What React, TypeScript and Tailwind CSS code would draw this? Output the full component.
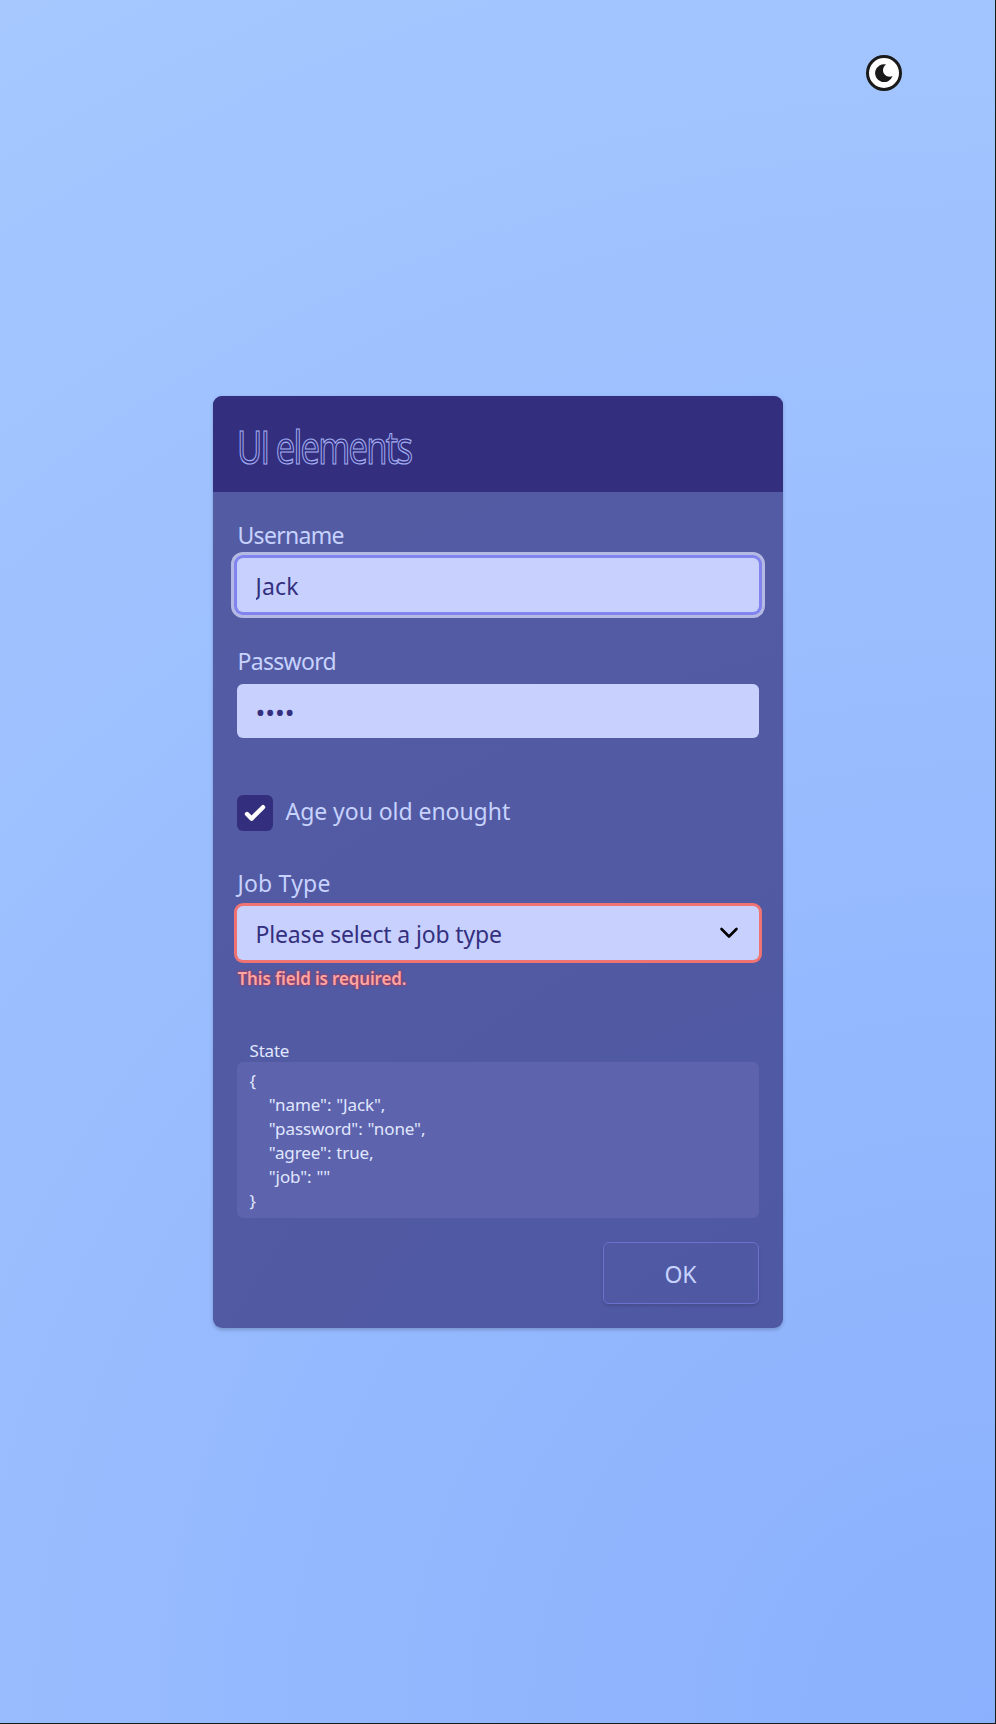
import React, { useState } from "react";

const label = "block h-9 pt-px pl-px text-[23px] leading-9 text-[#c7d2fe]";
const field = "h-[54px] w-full rounded-md bg-[#c8d1fe] pt-[2px] pr-[18px] pl-[19px] text-[23px] leading-[52px] text-[#34307f] outline-none";

function ThemeToggle() {
  return (
    <button
      type="button"
      aria-label="Toggle theme"
      className="absolute top-[55px] right-[93px] flex size-9 items-center justify-center rounded-full border-[3px] border-[#1a1a1a] bg-white"
    >
      <svg viewBox="0 0 18 18" className="size-[18px]" fill="#1a1a1a">
        <path d="M11.2 0.4A9 9 0 1 0 17.6 12.1C12.6 14.2 8 10.6 8 6.3C8 3.8 9.2 1.6 11.2 0.4Z" />
      </svg>
    </button>
  );
}

export default function App() {
  const [name, setName] = useState("Jack");
  const [password, setPassword] = useState("none");
  const [agree, setAgree] = useState(true);
  const state = JSON.stringify({ name, password, agree, job: "" }, null, 4);

  return (
    <div className="h-[1724px] w-[996px] bg-[#1a1a1a] pr-px pb-px font-['Noto_Sans',sans-serif]">
      <main className="relative flex h-full items-center justify-center bg-[radial-gradient(circle_farthest-corner_at_bottom_right,#8bb0fd,#a6c8ff)]">
        <ThemeToggle />
        <section className="w-[570px] overflow-hidden rounded-[9px] bg-[#33307c]/70 shadow-[0_1.5px_4.5px_rgba(0,0,0,0.12),0_1.5px_3px_rgba(0,0,0,0.08)]">
          <header className="flex h-24 items-center bg-[#332f7e] px-6">
            <h1 className="origin-left scale-x-[0.77] pt-[7px] font-['Open_Sans',sans-serif] text-[45px] leading-[54px] tracking-[-2.25px] whitespace-nowrap text-transparent [-webkit-text-stroke:1.2px_#a5b0f4]">
              UI elements
            </h1>
          </header>
          <form className="flex flex-col p-6" onSubmit={(e) => e.preventDefault()}>
            <label className={label + " tracking-[-0.7px]"} htmlFor="name">Username</label>
            <input
              id="name"
              className={field + " mt-1.5 tracking-[0.2px] shadow-[0_0_0_3px_#8183ee,0_0_0_6px_#b4bae3]"}
              value={name}
              onChange={(e) => setName(e.target.value)}
            />
            <label className={label + " mt-[30px] tracking-[-0.7px]"} htmlFor="password">Password</label>
            <input
              id="password"
              type="password"
              className="mt-1.5 h-[54px] w-full rounded-md bg-[#c8d1fe] pt-[3px] pr-[18px] pl-[19px] text-[26px] leading-[51px] text-[#34307f] outline-none"
              value={password}
              onChange={(e) => setPassword(e.target.value)}
            />
            <div className="mt-[57px] flex h-9 items-center gap-3">
              <button
                type="button"
                role="checkbox"
                aria-checked={agree}
                onClick={() => setAgree(!agree)}
                className="flex size-9 items-center justify-center rounded-md bg-[#332f7e]"
              >
                {agree && (
                  <svg viewBox="0 0 36 36" className="size-9" fill="none" stroke="white" strokeWidth="4.4" strokeLinecap="round" strokeLinejoin="round">
                    <path d="M10 19L14.6 23.6L26 12.2" />
                  </svg>
                )}
              </button>
              <span className="-mt-1 h-9 pl-px text-[23px] leading-9 tracking-[-0.05px] text-[#c7d2fe]">Age you old enought</span>
            </div>
            <span className={label + " mt-[33px] tracking-[0.2px]"}>Job Type</span>
            <div className={field + " mt-1.5 flex items-center justify-between tracking-[-0.15px] shadow-[0_0_0_3px_#f07373]"}>
              <span>Please select a job type</span>
              <svg viewBox="0 0 24 24" className="-mt-0.5 size-6" fill="none" stroke="black" strokeWidth="2.6" strokeLinecap="round" strokeLinejoin="round">
                <path d="M4.5 8L12 15.5L19.5 8" />
              </svg>
            </div>
            <p className="mt-1.5 h-6 pt-px pl-px text-[17px] leading-6 font-semibold tracking-[-0.15px] text-[#fca5a5] [text-shadow:0_0_3px_#dc2626]">
              This field is required.
            </p>
            <div className="mt-[48px] h-6 pt-px pl-[13px] text-[17px] leading-6 tracking-[-0.2px] text-[#e0e7ff]">State</div>
            <pre className="h-[156px] rounded-md bg-[#5d63ad] pt-[7px] pr-3 pl-[13px] font-['Noto_Sans',sans-serif] text-[17px] leading-6 tracking-[-0.1px] text-[#e0e7ff] [word-spacing:0.5px]">
              {state}
            </pre>
            <button
              type="submit"
              className="mt-6 h-[62px] w-[156px] self-end rounded-md border border-[#6d70cc] pt-[3px] text-[23px] text-[#c7d2fe] shadow-[0_1.5px_3px_rgba(0,0,0,0.12)]"
            >
              OK
            </button>
          </form>
        </section>
      </main>
    </div>
  );
}
